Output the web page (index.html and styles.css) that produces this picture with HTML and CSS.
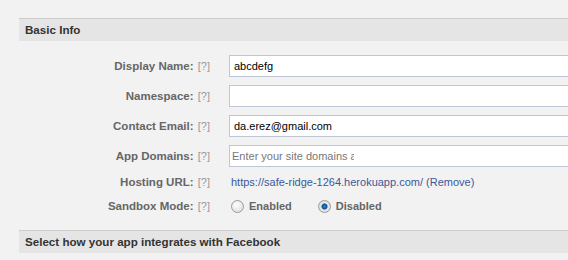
FILE: index.html
```html
<!DOCTYPE html>
<html lang="en">
<head>
    <meta charset="UTF-8">
    <title>Basic Info</title>
    <link rel="stylesheet" href="styles.css">
</head>
<body>
    <div class="section">
        <div class="section-header">Basic Info</div>
        <div class="form">
            <div class="row">
                <div class="label">Display Name: <span class="help">[?]</span></div>
                <div class="field"><input type="text" value="abcdefg"></div>
            </div>
            <div class="row">
                <div class="label">Namespace: <span class="help">[?]</span></div>
                <div class="field"><input type="text" value=""></div>
            </div>
            <div class="row">
                <div class="label">Contact Email: <span class="help">[?]</span></div>
                <div class="field"><input type="text" value="da.erez@gmail.com"></div>
            </div>
            <div class="row">
                <div class="label">App Domains: <span class="help">[?]</span></div>
                <div class="field">
                    <div class="token-box"><span class="token-input">Enter your site domains and press enter</span></div>
                </div>
            </div>
            <div class="row short">
                <div class="label">Hosting URL: <span class="help">[?]</span></div>
                <div class="field text">
                    <a href="#">https://safe-ridge-1264.herokuapp.com/</a> <a href="#">(Remove)</a>
                </div>
            </div>
            <div class="row short">
                <div class="label">Sandbox Mode: <span class="help">[?]</span></div>
                <div class="field radios">
                    <label class="radio"><span class="dot"></span>Enabled</label>
                    <label class="radio"><span class="dot checked"></span>Disabled</label>
                </div>
            </div>
        </div>
        <div class="section-header">Select how your app integrates with Facebook</div>
    </div>
</body>
</html>
```

FILE: styles.css
```css
body {
    margin: 0;
    background-color: #f2f2f2;
    font-family: "Liberation Sans", Arial, sans-serif;
    font-size: 11px;
    color: #333;
    overflow: hidden;
}

.section {
    margin-left: 19px;
    width: 620px;
    padding-top: 18px;
}

.section-header {
    height: 22px;
    line-height: 22px;
    padding-left: 6px;
    border-top: 1px solid #ccc;
    background-color: #e5e5e5;
    font-weight: bold;
    font-size: 11.6px;
    color: #333;
}

.form {
    padding: 14px 0 17px;
}

.row {
    display: flex;
    align-items: center;
    height: 22px;
    margin-bottom: 8px;
}

.row.short {
    height: 14px;
    margin-bottom: 10px;
}

.row:last-child {
    margin-bottom: 0;
}

.label {
    width: 191px;
    text-align: right;
    font-weight: bold;
    font-size: 11.5px;
    color: #666;
    white-space: nowrap;
}

.help {
    font-weight: normal;
    font-size: 11px;
    color: #999;
    margin-left: 1px;
}

.field {
    flex: 1;
    margin-left: 19px;
}

.field input,
.token-box {
    box-sizing: border-box;
    width: 100%;
    height: 22px;
    border: 1px solid #bdc7d8;
    background: white;
    padding: 0 4px;
    font-family: inherit;
    font-size: 11px;
    color: #000;
    outline: none;
}

.token-box {
    display: flex;
    align-items: center;
    padding: 0 2px;
}

.token-input {
    width: 122px;
    overflow: hidden;
    white-space: nowrap;
    color: #777;
}

.field.text a {
    color: #3b5998;
    text-decoration: none;
}

.field.text {
    padding-left: 2px;
}

.radios {
    display: flex;
    gap: 26px;
    padding-left: 2px;
}

.radio {
    display: flex;
    align-items: center;
    font-weight: bold;
    color: #666;
}

.dot {
    box-sizing: border-box;
    width: 13px;
    height: 13px;
    border-radius: 50%;
    border: 1px solid #9a9a9a;
    background: radial-gradient(circle at 40% 35%, #fdfdfd, #d8d8d8);
    margin-right: 5px;
}

.dot.checked {
    background: radial-gradient(circle, #2c8ad8 0, #0b4e95 2.5px, #e8e8e8 3.5px, #d2d2d2 100%);
}
```
